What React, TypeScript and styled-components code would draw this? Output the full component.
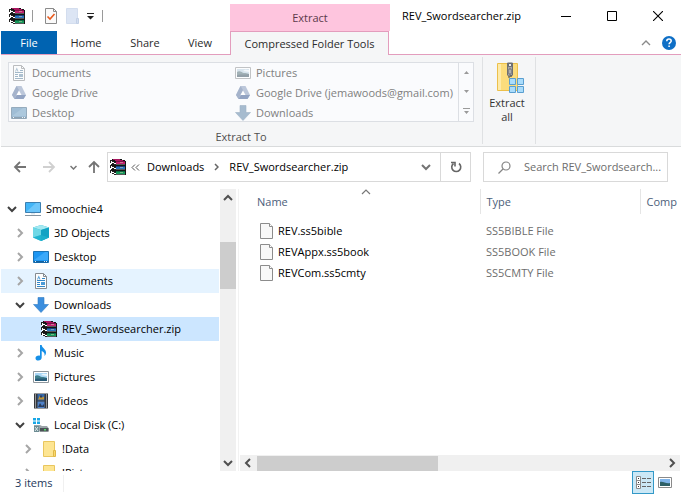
import React from 'react';
import styled, { createGlobalStyle } from 'styled-components';

const GlobalStyle = createGlobalStyle`
  *, *::before, *::after { box-sizing: border-box; }
  html, body, #root { margin: 0; height: 100%; }
  body {
    background: #fff;
    color: #000;
    font: 11px/16px "Open Sans", "Noto Sans", sans-serif;
    overflow: hidden;
  }
  button, input {
    font: inherit;
    color: inherit;
    margin: 0;
    padding: 0;
    border: 0;
    background: none;
  }
  svg { display: block; flex: none; }
`;

/* ---------- icons ---------- */

const Book = ({ y, cover, spine }: { y: number; cover: string; spine: string }) => (
  <g transform={`translate(0 ${y})`}>
    <path d="M0 1h2v1h2v1h2v3H4V5H2V4H0z" fill="#222" />
    <path d="M1 2h1v1h2v1h2v1H4V4H2v1H1z" fill="#fff" />
    <path d="M6 2h9v1H6z" fill={cover} />
    <path d="M6 3h9v2H6z" fill={spine} />
    <path d="M10 3h3v1h-3z" fill="#d8d2b4" opacity=".5" />
    <path d="M6 5h9v1H6z" fill="#ddd" opacity=".35" />
  </g>
);

const Books = () => (
  <svg width="16" height="16" viewBox="0 0 16 16" shapeRendering="crispEdges" aria-hidden="true">
    <path d="M2 0h9l5 2v14H5l-4-3V2z" fill="#151515" />
    <Book y={10} cover="#0c6b40" spine="#17995b" />
    <Book y={5} cover="#143f7c" spine="#2a74bd" />
    <Book y={0} cover="#7d0f48" spine="#c2206f" />
    <path d="M3 0h7v1h3v1H5V1H3z" fill="#a8175f" />
  </svg>
);

const DocumentIcon = () => (
  <svg width="16" height="16" viewBox="0 0 16 16" aria-hidden="true">
    <path d="M2.500.5h8l3 3v12h-11z" fill="#fdfdfd" stroke="#848b91" />
    <path d="M10.500.5v3h3" fill="none" stroke="#848b91" />
    <path d="M4 7.500h8M9 5.500h3M4 9.500h3M4 11.500h3M4 13.500h8" stroke="#3187c9" />
    <path d="M4 6.500l1.800-4 1.700 4h-1l-.7-2-.8 2zM8 9h4v3H8z" fill="#4b9ad6" />
  </svg>
);

const DriveIcon = () => (
  <svg width="16" height="16" viewBox="0 0 16 16" aria-hidden="true">
    <path d="M5.500 1h5L15 10l-2.500 4h-9L1 10z" fill="#bcc7da" />
    <path d="M5.500 1L1 10l2.500 4L8 5z" fill="#a5b3cb" />
    <path d="M3.500 14h9l2.500-4H6z" fill="#93a4c3" />
    <path d="M8 5.500L10.500 10h-5z" fill="#fff" />
  </svg>
);

const DesktopIcon = () => (
  <svg width="16" height="16" viewBox="0 0 16 16" aria-hidden="true">
    <path d="M.5 2.500h15v11H.5z" fill="#1d96f2" stroke="#1b73b5" />
    <path d="M1 11L12 3h3v8z" fill="#3ba9fa" />
    <path d="M1 12h14v1.500H1z" fill="#12619e" />
    <path d="M2 12.500h1M11 12.500h1M13 12.500h1" stroke="#d9efff" />
  </svg>
);

const PictureIcon = () => (
  <svg width="16" height="16" viewBox="0 0 16 16" aria-hidden="true">
    <path d="M.5 2.500h15v11H.5z" fill="#fff" stroke="#8f979d" />
    <path d="M2 4h12v8H2z" fill="#a9d6f5" />
    <path d="M2 7c3-2 5 1 7 1s3 0 5 1v3H2z" fill="#3f7f8c" />
    <path d="M2 10c4-1 7 0 12-1v3H2z" fill="#285b78" />
    <path d="M8 6c2-2 4-1 6-1v2z" fill="#e9f6fd" />
  </svg>
);

const DownloadIcon = () => (
  <svg width="16" height="16" viewBox="0 0 16 16" aria-hidden="true">
    <path d="M5 .5h6v7h4.500L8 15.500.5 7.500H5z" fill="#3b8ede" stroke="#2f7cc4" strokeWidth=".6" />
  </svg>
);

const ComputerIcon = () => (
  <svg width="16" height="16" viewBox="0 0 16 16" aria-hidden="true">
    <path d="M.5 1.500h15v10H.5z" fill="#42b5f7" stroke="#3c7fb0" />
    <path d="M1 11L11 2h4v9z" fill="#6dc6fa" />
    <path d="M6 12h4v1.500H6z" fill="#dde6ec" />
    <path d="M0 14.500h16" stroke="#8594a0" />
  </svg>
);

const CubeIcon = () => (
  <svg width="16" height="16" viewBox="0 0 16 16" aria-hidden="true">
    <path d="M8 0l8 2.500v10L8 16l-8-3.500v-10z" fill="#23b6d3" />
    <path d="M8 0l8 2.500L8 5 0 2.500z" fill="#a5e9f1" />
    <path d="M8 5l8-2.500v10L8 16z" fill="#12a3c4" />
    <path d="M0 2.500L8 5v5l-8 2.500z" fill="#6fd8e6" />
    <path d="M8 10l8 2.500L8 16l-8-3.500z" fill="#1fb4cf" opacity=".7" />
  </svg>
);

const MusicIcon = () => (
  <svg width="16" height="16" viewBox="0 0 16 16" aria-hidden="true">
    <path d="M7 0h1.700c.2 3 4.300 4 4.300 7.500 0 1.500-.6 2.500-1.500 3.500.6-3-1-4.300-2.800-5v6.500c0 2-1.500 3-3.400 3C3.700 15.500 2.500 14.700 2.500 13.200c0-1.700 1.800-2.900 4.500-2.500z" fill="#1690e8" />
  </svg>
);

const VideoIcon = () => (
  <svg width="16" height="16" viewBox="0 0 16 16" aria-hidden="true">
    <path d="M1 .5h14v15H1z" fill="#35373b" />
    <path d="M4.500 1h7v6.500h-7z" fill="#3567a8" />
    <path d="M4.500 8.500h7V15h-7z" fill="#4f82c9" />
    <path d="M5 6.500l2-4 2 2 2-1v3z" fill="#c39431" />
    <path d="M7 2.500h2v2H7zM5 14l2-4 2 3 2-2v3z" fill="#2b3d5c" />
    <path d="M2.500 1.500v14M13.500 1.500v14" stroke="#f2f2f2" strokeDasharray="1 1" />
  </svg>
);

const DiskIcon = () => (
  <svg width="16" height="16" viewBox="0 0 16 16" aria-hidden="true">
    <path d="M0 1h3v2.500H0zM4 1h3v2.500H4zM0 4.500h3V7H0zM4 4.500h3V7H4z" fill="#18a7e6" />
    <path d="M1 8h6l2 1h5l1.500 2v3.500H1z" fill="#9aa3a8" />
    <path d="M7 11h8.500v3.500H7z" fill="#4b5257" />
    <path d="M1 9h5v6H1z" fill="#6d8c93" />
    <path d="M2 10l3 4M5 10l-3 4" stroke="#dfe9ea" />
    <path d="M11 12h2v1.500h-2z" fill="#52e06b" />
  </svg>
);

const FolderIcon = () => (
  <svg width="16" height="16" viewBox="0 0 16 16" aria-hidden="true">
    <path d="M2.500.5h11v15h-11z" fill="#fde592" stroke="#e9c65e" />
    <path d="M12.500 9.500h2v6h-2z" fill="#fbd96c" stroke="#e0b848" />
  </svg>
);

const FileIcon = () => (
  <svg width="13" height="16" viewBox="0 0 13 16" aria-hidden="true">
    <path d="M.5.5h9l3 3v12H.5z" fill="#f8f8f8" stroke="#8c8c8c" />
    <path d="M9.500.5v3h3" fill="#fff" stroke="#8c8c8c" />
  </svg>
);

const PropertiesIcon = () => (
  <svg width="12" height="16" viewBox="0 0 12 16" aria-hidden="true">
    <path d="M.5.5h8l3 3v12H.5z" fill="#fafafa" stroke="#8b8b8b" />
    <path d="M8.500.5v3h3" fill="none" stroke="#8b8b8b" />
    <path d="M2.500 8.500L5 11l4.500-5" fill="none" stroke="#e8591c" strokeWidth="1.600" />
  </svg>
);

const NewFolderIcon = () => (
  <svg width="13" height="16" viewBox="0 0 13 16" aria-hidden="true">
    <path d="M.5.500h11v15H.5z" fill="#dce5f4" stroke="#d3ddee" />
    <path d="M10.500 10.500h2v5h-2z" fill="#d4dff0" stroke="#c3d0e6" />
  </svg>
);

const ZipIcon = () => (
  <svg width="28" height="32" viewBox="0 0 28 32" aria-hidden="true">
    <path d="M1.500 1.500h20v27h-20z" fill="#fbdc7c" stroke="#ecc04a" />
    <path d="M2 2h3v26H2z" fill="#fdeaa9" />
    <path d="M11.500 1v12c0 1.500 5 1.500 5 0V1z" fill="#a3a5a8" stroke="#6d6f72" />
    <path d="M12.500 1.500h3v3h-3zM13 7h2v5h-2z" fill="#e8e9ea" stroke="#55575a" strokeWidth=".8" />
    <path d="M12 15h2M14 14h2" stroke="#444" />
    <path d="M13.500 16.500h6v6h-6zM21.500 16.500h6v6h-6zM13.500 24.500h6v6h-6zM21.500 24.500h6v6h-6z" fill="#aadcfb" stroke="#5a9fd0" />
  </svg>
);

type ChevronDir = 'up' | 'down' | 'right' | 'left';
const chevronPaths: Record<ChevronDir, string> = {
  up: 'M1 7l4-4 4 4',
  down: 'M1 3l4 4 4-4',
  right: 'M3 1l4 4-4 4',
  left: 'M7 1L3 5l4 4',
};
const Chevron = ({ dir, color = '#505050', weight = 2 }: { dir: ChevronDir; color?: string; weight?: number }) => (
  <svg width="10" height="10" viewBox="0 0 10 10" fill="none" stroke={color} strokeWidth={weight} aria-hidden="true">
    <path d={chevronPaths[dir]} />
  </svg>
);

const Arrow = ({ turn = 0, color = '#747474' }: { turn?: number; color?: string }) => (
  <svg width="14" height="14" viewBox="0 0 14 14" fill="none" stroke={color} strokeWidth="1.800" aria-hidden="true">
    <path d="M13 7H2M7 2L2 7l5 5" transform={`rotate(${turn} 7 7)`} />
  </svg>
);

/* ---------- frame ---------- */

const Window = styled.div`
  display: flex;
  flex-direction: column;
  height: 100vh;
  padding-left: 1px;
`;

const TitleBar = styled.header`
  display: grid;
  grid-template-columns: 229px 160px 1fr auto;
  height: 31px;
  flex: none;
`;

const QuickAccess = styled.div`
  display: flex;
  align-items: center;
  padding-left: 8px;
`;

const Divider = styled.span<{ $left: number; $right: number }>`
  width: 1px;
  height: 12px;
  margin: 0 ${p => p.$right}px 0 ${p => p.$left}px;
  background: #9a9a9a;
`;

const IconButton = styled.button<{ $width: number }>`
  display: flex;
  align-items: center;
  justify-content: center;
  flex: none;
  width: ${p => p.$width}px;
`;

const ContextGroup = styled.div`
  margin-top: 4px;
  padding-top: 6px;
  background: #fec5de;
  color: #5c3a4a;
  text-align: center;
`;

const WindowTitle = styled.div`
  padding: 8px 0 0 12px;
  white-space: nowrap;
`;

const Caption = styled.div`
  display: flex;
  align-items: center;
`;

const Tabs = styled.nav`
  display: flex;
  flex: none;
  height: 24px;
  border-bottom: 1px solid #e39dbd;
`;

const Tab = styled.button<{ $width: number; $kind?: 'file' | 'active' }>`
  width: ${p => p.$width}px;
  flex: none;
  height: 23px;
  white-space: nowrap;
  color: ${p => (p.$kind === 'file' ? '#fff' : '#2b2b2b')};
  background: ${p => (p.$kind === 'file' ? '#0063b1' : p.$kind === 'active' ? '#f5f6f7' : 'none')};
  ${p => p.$kind === 'active' && 'height: 24px; border: 1px solid #e39dbd; border-bottom: 0;'}
`;

const Space = styled.span<{ $width?: number }>`
  ${p => (p.$width ? `width: ${p.$width}px; flex: none;` : 'flex: 1;')}
`;

/* ---------- ribbon ---------- */

const Ribbon = styled.section`
  display: flex;
  flex: none;
  height: 92px;
  padding-left: 7px;
  background: #f5f6f7;
  border-bottom: 1px solid #d9dbdc;
`;

const ExtractTo = styled.div`
  width: 466px;
  padding-top: 7px;
  flex: none;
`;

const Gallery = styled.div`
  display: flex;
  height: 60px;
  border: 1px solid #dcdfe4;
  background: #fafbfd;
`;

const Targets = styled.div`
  display: grid;
  grid-template-columns: 224px 1fr;
  grid-auto-rows: 20px;
  flex: 1;
  min-width: 0;
  padding-left: 2px;
`;

const Target = styled.button`
  display: flex;
  align-items: center;
  gap: 5px;
  min-width: 0;
  white-space: nowrap;
  color: #808080;
`;

const Faded = styled.span`
  opacity: 0.55;
  filter: grayscale(0.55);
`;

const Spinner = styled.div`
  display: grid;
  grid-template-rows: repeat(3, 1fr);
  width: 15px;
  flex: none;
  border-left: 1px solid #dcdfe4;
`;

const GroupLabel = styled.div`
  padding-top: 7px;
  text-align: center;
  color: #505050;
`;

const ExtractAll = styled.button`
  display: flex;
  flex-direction: column;
  align-items: center;
  width: 54px;
  height: 87px;
  margin: 2px 0 0 8px;
  padding: 5px 4px 0 0;
  line-height: 14px;
  color: #333;
  border: solid #dfe1e3;
  border-width: 0 1px;

  svg { margin: 0 0 2px 5px; }
  span { width: 40px; }
`;

/* ---------- address row ---------- */

const AddressRow = styled.div`
  display: flex;
  flex: none;
  height: 42px;
  padding: 5px 13px 7px 10px;
`;

const Address = styled.div`
  display: flex;
  align-items: center;
  flex: 1;
  border: 1px solid #d9d9d9;
  padding-left: 2px;
`;

const Crumb = styled.button`
  white-space: nowrap;
`;

const Refresh = styled(IconButton)`
  align-self: stretch;
  border-left: 1px solid #d9d9d9;
`;

const Search = styled.label`
  display: flex;
  align-items: center;
  gap: 13px;
  width: 185px;
  margin-left: 12px;
  padding-left: 14px;
  border: 1px solid #d9d9d9;

  input {
    flex: 1;
    min-width: 0;
    outline: 0;
  }
  input::placeholder { color: #6d6d6d; opacity: 1; }
`;

/* ---------- body ---------- */

const Body = styled.div`
  display: flex;
  flex: 1;
  min-height: 0;
`;

const Tree = styled.ul`
  width: 218px;
  flex: none;
  margin: 0;
  padding: 8px 0 0;
  overflow: hidden;
  list-style: none;
`;

const TreeRow = styled.button<{ $depth: number; $state?: 'hover' | 'selected' }>`
  display: flex;
  align-items: center;
  width: 100%;
  height: 24px;
  padding-left: ${p => 6 + p.$depth * 8}px;
  white-space: nowrap;
  background: ${p => (p.$state === 'selected' ? '#cce6ff' : p.$state === 'hover' ? '#e5f3ff' : 'none')};
`;

const Twisty = styled.span`
  width: 10px;
  height: 10px;
  margin-right: 8px;
`;

const TreeIcon = styled.span`
  margin-right: 5px;
`;

const VScroll = styled.div`
  display: flex;
  flex-direction: column;
  align-items: center;
  width: 16px;
  flex: none;
  margin: 0 1px;
  padding: 4px 0 3px;
  background: #f0f0f0;
`;

const VThumb = styled.div`
  width: 16px;
  height: 47px;
  margin-top: 39px;
  background: #cdcdcd;
`;

const Track = styled.div`
  flex: 1;
`;

const Content = styled.main`
  display: flex;
  flex-direction: column;
  flex: 1;
  min-width: 0;
  margin-left: 1px;
  border-left: 1px solid #f2f2f2;
`;

const Files = styled.div`
  flex: 1;
  overflow: hidden;
`;

const Table = styled.table`
  width: 100%;
  table-layout: fixed;
  border-collapse: collapse;

  tbody::before {
    content: '';
    display: block;
    height: 6px;
  }
`;

const Heading = styled.th<{ $width?: number; $left: number }>`
  position: relative;
  width: ${p => (p.$width ? `${p.$width}px` : 'auto')};
  height: 25px;
  padding: 1px 0 0 ${p => p.$left}px;
  overflow: hidden;
  font-weight: 400;
  text-align: left;
  color: #4c607a;
  border-right: 1px solid #e5e5e5;

  &:last-child { border-right: 0; }

  svg { position: absolute; top: -2px; left: 122px; }
`;

const Cell = styled.td<{ $left: number }>`
  height: 21px;
  padding: 0 0 0 ${p => p.$left}px;
  white-space: nowrap;
  color: #6d6d6d;
`;

const FileName = styled.div`
  display: flex;
  align-items: center;
  gap: 5px;
  color: #000;
`;

const HScroll = styled.div`
  display: flex;
  align-items: center;
  flex: none;
  height: 16px;
  margin: 0 1px;
  padding: 0 3px;
  background: #f0f0f0;
`;

const HThumb = styled.div`
  width: 181px;
  height: 15px;
  margin-left: 4px;
  background: #cdcdcd;
`;

const StatusBar = styled.footer`
  display: flex;
  flex: none;
  height: 27px;
  padding: 0 5px 4px 14px;
  color: #1e395b;
`;

const ItemCount = styled.span`
  width: 49px;
  margin: 4px 0 2px;
  border-right: 1px solid #f0f0f0;
`;

const ViewButton = styled.button<{ $on?: boolean }>`
  display: flex;
  align-items: center;
  justify-content: center;
  width: 22px;
  height: 23px;
  border: 1px solid ${p => (p.$on ? '#3399c8' : 'transparent')};
  background: ${p => (p.$on ? '#cbe8f6' : 'none')};
`;

/* ---------- data ---------- */

const targets = [
  { label: 'Documents', icon: <DocumentIcon /> },
  { label: 'Pictures', icon: <PictureIcon /> },
  { label: 'Google Drive', icon: <DriveIcon />, solid: true },
  { label: 'Google Drive (jemawoods@gmail.com)', icon: <DriveIcon />, solid: true },
  { label: 'Desktop', icon: <DesktopIcon /> },
  { label: 'Downloads', icon: <DownloadIcon /> },
];

type Node = { label: string; icon: React.ReactNode; depth: number; open?: boolean; leaf?: boolean; state?: 'hover' | 'selected' };
const nodes: Node[] = [
  { label: 'Smoochie4', icon: <ComputerIcon />, depth: 0, open: true },
  { label: '3D Objects', icon: <CubeIcon />, depth: 1 },
  { label: 'Desktop', icon: <DesktopIcon />, depth: 1 },
  { label: 'Documents', icon: <DocumentIcon />, depth: 1, state: 'hover' },
  { label: 'Downloads', icon: <DownloadIcon />, depth: 1, open: true },
  { label: 'REV_Swordsearcher.zip', icon: <Books />, depth: 2, leaf: true, state: 'selected' },
  { label: 'Music', icon: <MusicIcon />, depth: 1 },
  { label: 'Pictures', icon: <PictureIcon />, depth: 1 },
  { label: 'Videos', icon: <VideoIcon />, depth: 1 },
  { label: 'Local Disk (C:)', icon: <DiskIcon />, depth: 1, open: true },
  { label: '!Data', icon: <FolderIcon />, depth: 2 },
  { label: '!Pictures', icon: <FolderIcon />, depth: 2 },
];

const files = [
  { name: 'REV.ss5bible', type: 'SS5BIBLE File' },
  { name: 'REVAppx.ss5book', type: 'SS5BOOK File' },
  { name: 'REVCom.ss5cmty', type: 'SS5CMTY File' },
];

export default function App() {
  return (
    <Window>
      <GlobalStyle />
      <TitleBar>
        <QuickAccess>
          <Books />
          <Divider $left={7} $right={9} />
          <IconButton $width={17} aria-label="Properties"><PropertiesIcon /></IconButton>
          <IconButton $width={27} aria-label="New folder"><NewFolderIcon /></IconButton>
          <IconButton $width={9} aria-label="Customize toolbar">
            <svg width="7" height="8" viewBox="0 0 7 8"><path d="M0 1h7v1H0zM0 4h7L3.500 7.500z" fill="#222" /></svg>
          </IconButton>
          <Divider $left={7} $right={0} />
        </QuickAccess>
        <ContextGroup>Extract</ContextGroup>
        <WindowTitle>REV_Swordsearcher.zip</WindowTitle>
        <Caption>
          <IconButton $width={46} aria-label="Minimize">
            <svg width="10" height="10" viewBox="0 0 10 10"><path d="M0 5.500h10" stroke="#000" /></svg>
          </IconButton>
          <IconButton $width={46} aria-label="Maximize">
            <svg width="10" height="10" viewBox="0 0 10 10"><path d="M.5.5h9v9h-9z" fill="none" stroke="#000" /></svg>
          </IconButton>
          <IconButton $width={46} aria-label="Close">
            <svg width="10" height="10" viewBox="0 0 10 10"><path d="M0 0l10 10M10 0L0 10" stroke="#000" strokeWidth="1.100" /></svg>
          </IconButton>
        </Caption>
      </TitleBar>

      <Tabs>
        <Tab $width={56} $kind="file">File</Tab>
        <Tab $width={58}>Home</Tab>
        <Tab $width={60}>Share</Tab>
        <Tab $width={50}>View</Tab>
        <Space $width={5} />
        <Tab $width={159} $kind="active">Compressed Folder Tools</Tab>
        <Space />
        <IconButton $width={20} aria-label="Collapse ribbon"><Chevron dir="up" color="#8a8a8a" weight={1.4} /></IconButton>
        <IconButton $width={25} aria-label="Help">
          <svg width="14" height="14" viewBox="0 0 14 14">
            <circle cx="7" cy="7" r="7" fill="#0f6fc6" />
            <path d="M4.800 5.200c0-1.400 1-2.100 2.200-2.100s2.200.7 2.200 1.900c0 1.600-2.100 1.600-2.100 3.300M7.100 9.500v1.600" fill="none" stroke="#fff" strokeWidth="1.500" />
          </svg>
        </IconButton>
      </Tabs>

      <Ribbon>
        <ExtractTo>
          <Gallery>
            <Targets>
              {targets.map(t => (
                <Target key={t.label}>{t.solid ? t.icon : <Faded>{t.icon}</Faded>}{t.label}</Target>
              ))}
            </Targets>
            <Spinner>
              <IconButton $width={14} aria-label="Scroll up">
                <svg width="5" height="3" viewBox="0 0 5 3"><path d="M0 3L2.500 0 5 3z" fill="#9a9a9a" /></svg>
              </IconButton>
              <IconButton $width={14} aria-label="Scroll down">
                <svg width="5" height="3" viewBox="0 0 5 3"><path d="M0 0l2.500 3L5 0z" fill="#9a9a9a" /></svg>
              </IconButton>
              <IconButton $width={14} aria-label="More">
                <svg width="7" height="6" viewBox="0 0 7 6"><path d="M0 0h7v1H0zM1 3l2.500 3L6 3z" fill="#9a9a9a" /></svg>
              </IconButton>
            </Spinner>
          </Gallery>
          <GroupLabel>Extract To</GroupLabel>
        </ExtractTo>
        <ExtractAll><ZipIcon /><span>Extract all</span></ExtractAll>
      </Ribbon>

      <AddressRow>
        <IconButton $width={18} aria-label="Back"><Arrow /></IconButton>
        <IconButton $width={40} aria-label="Forward"><Arrow turn={180} color="#d0d0d0" /></IconButton>
        <IconButton $width={8} aria-label="Recent locations">
          <svg width="7" height="5" viewBox="0 0 7 5"><path d="M.5 1l3 3 3-3" fill="none" stroke="#777" strokeWidth="1.500" /></svg>
        </IconButton>
        <Space $width={3} />
        <IconButton $width={27} aria-label="Up"><Arrow turn={90} /></IconButton>
        <Address>
          <Books />
          <IconButton $width={18} aria-label="Show parent folders">
            <svg width="9" height="7" viewBox="0 0 9 7"><path d="M4 .5l-3 3 3 3M8 .5l-3 3 3 3" fill="none" stroke="#555" /></svg>
          </IconButton>
          <Space $width={3} />
          <Crumb>Downloads</Crumb>
          <IconButton $width={25} aria-label="Show subfolders">
            <svg width="5" height="8" viewBox="0 0 5 8"><path d="M1 1l3 3-3 3" fill="none" stroke="#666" strokeWidth="1.500" /></svg>
          </IconButton>
          <Crumb>REV_Swordsearcher.zip</Crumb>
          <Space />
          <IconButton $width={28} aria-label="Previous locations"><Chevron dir="down" color="#747474" /></IconButton>
          <Refresh $width={30} aria-label="Refresh">
            <svg width="12" height="12" viewBox="0 0 12 12" fill="none" stroke="#666" strokeWidth="1.600">
              <path d="M9 2.500A4.500 4.500 0 1 1 3.500 2.500" />
              <path d="M1 1.500h4v4" />
            </svg>
          </Refresh>
        </Address>
        <Search>
          <svg width="13" height="13" viewBox="0 0 13 13" fill="none" stroke="#858585" strokeWidth="1.200">
            <circle cx="8" cy="5" r="4" /><path d="M5 8l-4.500 4.500" />
          </svg>
          <input type="text" aria-label="Search" placeholder="Search REV_Swordsearch..." />
        </Search>
      </AddressRow>

      <Body>
        <Tree>
          {nodes.map(n => (
            <li key={n.label}>
              <TreeRow $depth={n.depth} $state={n.state}>
                <Twisty>
                  {!n.leaf && <Chevron dir={n.open ? 'down' : 'right'} color={n.open ? '#404040' : '#a6a6a6'} />}
                </Twisty>
                <TreeIcon>{n.icon}</TreeIcon>
                {n.label}
              </TreeRow>
            </li>
          ))}
        </Tree>
        <VScroll>
          <Chevron dir="up" />
          <VThumb />
          <Track />
          <Chevron dir="down" />
        </VScroll>
        <Content>
          <Files>
            <Table>
              <thead>
                <tr>
                  <Heading $width={241} $left={18}>Name<Chevron dir="up" color="#777" weight={1.2} /></Heading>
                  <Heading $width={160} $left={6}>Type</Heading>
                  <Heading $left={6}>Comp</Heading>
                </tr>
              </thead>
              <tbody>
                {files.map(f => (
                  <tr key={f.name}>
                    <Cell $left={21}><FileName><FileIcon />{f.name}</FileName></Cell>
                    <Cell $left={6}>{f.type}</Cell>
                    <Cell $left={6} />
                  </tr>
                ))}
              </tbody>
            </Table>
          </Files>
          <HScroll>
            <Chevron dir="left" />
            <HThumb />
            <Track />
            <Chevron dir="right" />
          </HScroll>
        </Content>
      </Body>

      <StatusBar>
        <ItemCount>3 items</ItemCount>
        <Space />
        <ViewButton $on aria-label="Details view">
          <svg width="17" height="15" viewBox="0 0 17 15" fill="none">
            <path d="M1.500 1.500h4v12h-4zM1.500 5.500h4M1.500 9.500h4" fill="#fff" stroke="#8a8a8a" />
            <path d="M3 3.500h1M3 7.500h1M3 11.500h1" stroke="#333" />
            <path d="M7 3.500h4M12 3.500h4M7 7.500h4M12 7.500h4M7 11.500h4M12 11.500h4" stroke="#666" />
          </svg>
        </ViewButton>
        <ViewButton aria-label="Large icons view">
          <svg width="14" height="11" viewBox="0 0 14 11">
            <path d="M.5.5h13v10H.5z" fill="#fff" stroke="#8a8a8a" />
            <path d="M2 2h10v7H2z" fill="#7fb4ea" />
            <path d="M2 5c3-1 6 2 10 1v3H2z" fill="#2d5f66" />
          </svg>
        </ViewButton>
      </StatusBar>
    </Window>
  );
}
